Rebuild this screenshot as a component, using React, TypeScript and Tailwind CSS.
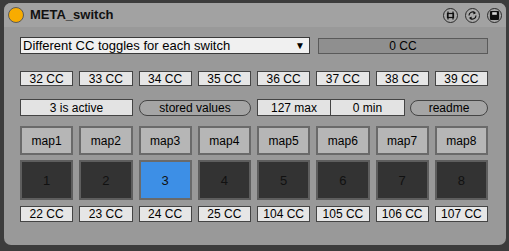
import React from 'react';

const topCC = ['32 CC', '33 CC', '34 CC', '35 CC', '36 CC', '37 CC', '38 CC', '39 CC'];
const bottomCC = ['22 CC', '23 CC', '24 CC', '25 CC', '104 CC', '105 CC', '106 CC', '107 CC'];
const active = 3;

function HeaderIcon({ children }: { children: React.ReactNode }) {
  return (
    <div className="w-[15px] h-[15px] rounded-full border border-[#2a2a2a] bg-[#a9a9a9] flex items-center justify-center">
      <svg width="11" height="11" viewBox="0 0 11 11" fill="none" stroke="#111" strokeWidth="1.2">
        {children}
      </svg>
    </div>
  );
}

export default function App() {
  return (
    <div
      className="w-[509px] h-[251px] bg-[#3c3c3c] pt-[3px] pl-[4px] overflow-hidden"
      style={{ fontFamily: '"Liberation Sans", Arial, sans-serif' }}
    >
      <div className="w-[502px] h-[242px] rounded-[7px] bg-[#999999] flex flex-col">
        {/* title bar */}
        <div className="h-[24px] flex items-center pl-[4px] pr-[4px] rounded-t-[7px] bg-[#a2a2a2]">
          <div className="w-[16px] h-[16px] rounded-full bg-[#f8ac00] border border-[#5a5a5a]" />
          <span className="ml-[6px] text-[13px] font-bold text-[#111]">META_switch</span>
          <div className="ml-auto flex items-center gap-[7px]">
            <HeaderIcon>
              <rect x="2.5" y="3.5" width="6" height="4" />
              <line x1="3" y1="1.5" x2="3" y2="9.5" />
              <line x1="8" y1="1.5" x2="8" y2="9.5" />
            </HeaderIcon>
            <HeaderIcon>
              <path d="M2 5.5 A3.5 3.5 0 0 1 8 3" />
              <path d="M9 5.5 A3.5 3.5 0 0 1 3 8" />
              <path d="M6.8 1.6 L8.4 3.2 L6.4 3.9" fill="#111" strokeWidth="0.8" />
              <path d="M4.2 9.4 L2.6 7.8 L4.6 7.1" fill="#111" strokeWidth="0.8" />
            </HeaderIcon>
            <HeaderIcon>
              <rect x="1.5" y="1.5" width="8" height="8" rx="0.8" fill="#111" />
              <rect x="3.2" y="2.2" width="4.6" height="2.6" fill="#d8d8d8" stroke="none" />
            </HeaderIcon>
          </div>
        </div>

        <div className="pl-[16px] pr-[18px] flex flex-col">
          {/* dropdown row */}
          <div className="mt-[10px] flex items-center">
            <div className="w-[290px] h-[17px] bg-[#f0f0f0] border border-[#3a3a3a] flex items-center pl-[2px] pr-[4px]">
              <span className="text-[13px] text-black leading-none">Different CC toggles for each switch</span>
              <span className="ml-auto text-[10px] leading-none text-black">▼</span>
            </div>
            <div className="ml-[8px] w-[170px] h-[16px] bg-[#8f8f8f] border border-[#5a5a5a] flex items-center justify-center text-[12px] text-black leading-none">
              0 CC
            </div>
          </div>

          {/* top CC row */}
          <div className="mt-[17px] grid grid-cols-8 gap-x-[6px]">
            {topCC.map((t) => (
              <div
                key={t}
                className="h-[15px] bg-[#e6e6e6] border border-[#444] flex items-center justify-center text-[12px] text-black leading-none"
              >
                {t}
              </div>
            ))}
          </div>

          {/* status row */}
          <div className="mt-[13px] flex items-center h-[17px]">
            <div className="w-[113px] h-[17px] bg-[#e3e3e3] border border-[#444] flex items-center justify-center text-[12px] text-black leading-none">
              3 is active
            </div>
            <div className="ml-[6px] w-[112px] h-[16px] rounded-full bg-[#a5a5a5] border border-[#444] flex items-center justify-center text-[12px] text-black leading-none">
              stored values
            </div>
            <div className="ml-[6px] flex h-[17px]">
              <div className="w-[74px] h-[17px] bg-[#e3e3e3] border border-[#444] flex items-center justify-center text-[12px] text-black leading-none">
                127 max
              </div>
              <div className="w-[74px] h-[17px] bg-[#e3e3e3] border border-l-0 border-[#444] flex items-center justify-center text-[12px] text-black leading-none">
                0 min
              </div>
            </div>
            <div className="ml-[5px] w-[78px] h-[16px] rounded-full bg-[#a5a5a5] border border-[#444] flex items-center justify-center text-[12px] text-black leading-none">
              readme
            </div>
          </div>

          {/* map buttons */}
          <div className="mt-[10px] grid grid-cols-8 gap-x-[6px]">
            {Array.from({ length: 8 }, (_, i) => (
              <div
                key={i}
                className="h-[29px] bg-[#b6b6b6] border-2 border-[#6a6a6a] flex items-center justify-center text-[12px] text-black leading-none"
              >
                map{i + 1}
              </div>
            ))}
          </div>

          {/* pads */}
          <div className="mt-[5px] grid grid-cols-8 gap-x-[6px]">
            {Array.from({ length: 8 }, (_, i) => (
              <div
                key={i}
                className={
                  i + 1 === active
                    ? 'h-[40px] bg-[#3d8fe6] border-2 border-[#6a6a6a] flex items-center justify-center text-[13px] text-[#111] leading-none'
                    : 'h-[40px] bg-[#333333] border-2 border-[#5e5e5e] flex items-center justify-center text-[13px] text-[#111] leading-none'
                }
              >
                {i + 1}
              </div>
            ))}
          </div>

          {/* bottom CC row */}
          <div className="mt-[6px] grid grid-cols-8 gap-x-[6px]">
            {bottomCC.map((t) => (
              <div
                key={t}
                className="h-[16px] bg-[#e6e6e6] border border-[#444] flex items-center justify-center text-[12px] text-black leading-none"
              >
                {t}
              </div>
            ))}
          </div>
        </div>
      </div>
    </div>
  );
}
